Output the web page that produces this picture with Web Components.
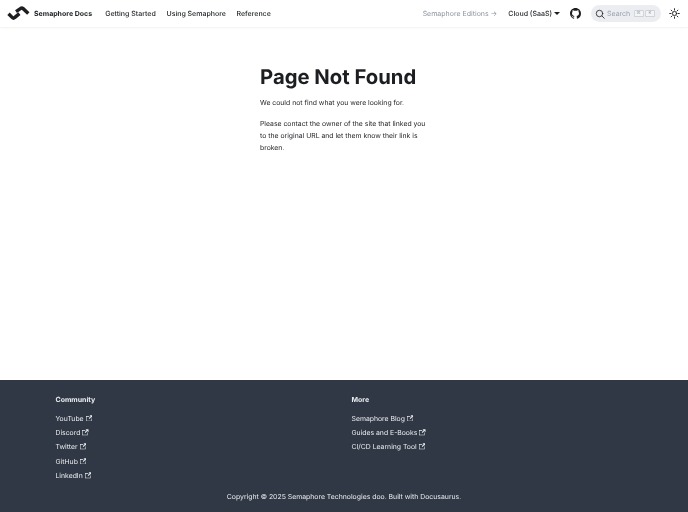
<!DOCTYPE html>
<html lang="en">
<head>
<meta charset="utf-8">
<title>Page Not Found</title>
<style>
html, body { margin: 0; height: 100%; }
body { font-family: Inter, "Liberation Sans", sans-serif; font-size: 6.9px; color: #1c1e21; text-rendering: geometricPrecision; }
</style>
</head>
<body>
<docs-page>
  <docs-navbar></docs-navbar>
  <not-found>
    <h1 slot="title">Page Not Found</h1>
    <p>We could not find what you were looking for.</p>
    <p>Please contact the owner of the site that linked you to the original URL and let them know their link is broken.</p>
  </not-found>
  <docs-footer>
    <footer-col slot="left" heading="Community" links="YouTube,Discord,Twitter,GitHub,LinkedIn"></footer-col>
    <footer-col slot="right" heading="More" links="Semaphore Blog,Guides and E-Books,CI/CD Learning Tool"></footer-col>
  </docs-footer>
</docs-page>
<script>
class DocsPage extends HTMLElement {
  constructor() {
    super();
    this.attachShadow({ mode: 'open' });
    this.shadowRoot.innerHTML = `
      <style>
        :host { display: flex; flex-direction: column; height: 512px; overflow: hidden; }
        ::slotted(not-found) { flex: 1; }
      </style>
      <slot></slot>
    `;
  }
}

class DocsNavbar extends HTMLElement {
  constructor() {
    super();
    this.attachShadow({ mode: 'open' });
    this.shadowRoot.innerHTML = `
      <style>
        :host {
          display: flex;
          align-items: center;
          height: 27px;
          padding: 0 8px 0 7px;
          background: #fff;
          box-shadow: 0 1px 2px rgba(0,0,0,0.06);
          position: relative;
          z-index: 1;
          filter: blur(0.3px);
          font-size: 7px;
          font-weight: 500;
          color: #1c1e21;
        }
        .logo { width: 23px; height: 15px; margin-right: 4px; }
        .brand { font-weight: 700; margin-right: 13px; }
        .link { margin-right: 10.7px; }
        .spacer { flex: 1; }
        .editions { color: #8d949e; font-weight: 400; margin-right: 11px; }
        .cloud { font-weight: 500; display: flex; align-items: center; gap: 2px; margin-right: 10px; }
        .caret { width: 0; height: 0; border: 3px solid transparent; border-top: 3.5px solid #1c1e21; border-bottom: 0; }
        .gh { width: 11px; height: 11px; margin-right: 10px; display: block; }
        .search {
          display: flex; align-items: center;
          width: 70px; height: 17px; box-sizing: border-box;
          padding: 0 4px;
          border-radius: 9px;
          background: #ebedf0;
          color: #969faf;
          font-weight: 400;
          margin-right: 8px;
        }
        .search svg { width: 10px; height: 10px; margin-right: 2px; }
        .keys { margin-left: auto; display: flex; gap: 1.5px; padding-right: 2px; }
        .key {
          width: 10px; height: 7.5px; border-radius: 1.5px;
          background: #f3f4f6;
          box-shadow: inset 0 0 0 0.7px #c4c8ce;
          font-size: 4.5px; line-height: 7.5px; text-align: center; color: #969faf;
        }
        .sun { width: 11px; height: 11px; display: block; }
      </style>
      <svg class="logo" viewBox="0 0 23 15" fill="none" stroke="#1c1e21" stroke-width="3.4">
        <path d="M1.5 7.8 L5.4 11.6 Q6.5 12.7 7.6 11.6 L12.4 7.6"/>
        <path d="M9 5.6 L13.7 2.4 Q14.8 1.5 15.9 2.4 L21.3 7.5"/>
      </svg>
      <span class="brand">Semaphore Docs</span>
      <span class="link">Getting Started</span>
      <span class="link">Using Semaphore</span>
      <span class="link">Reference</span>
      <span class="spacer"></span>
      <span class="editions">Semaphore Editions →</span>
      <span class="cloud">Cloud (SaaS) <span class="caret"></span></span>
      <svg class="gh" viewBox="0 0 16 16" fill="#1c1e21"><path d="M8 0C3.58 0 0 3.58 0 8c0 3.54 2.29 6.53 5.47 7.59.4.07.55-.17.55-.38 0-.19-.01-.82-.01-1.49-2.01.37-2.53-.49-2.69-.94-.09-.23-.48-.94-.82-1.13-.28-.15-.68-.52-.01-.53.63-.01 1.08.58 1.23.82.72 1.21 1.87.87 2.33.66.07-.52.28-.87.51-1.07-1.78-.2-3.64-.89-3.64-3.95 0-.87.31-1.59.82-2.15-.08-.2-.36-1.02.08-2.12 0 0 .67-.21 2.2.82.64-.18 1.32-.27 2-.27s1.36.09 2 .27c1.53-1.04 2.2-.82 2.2-.82.44 1.1.16 1.92.08 2.12.51.56.82 1.27.82 2.15 0 3.07-1.87 3.75-3.65 3.95.29.25.54.73.54 1.48 0 1.07-.01 1.93-.01 2.2 0 .21.15.46.55.38A8.01 8.01 0 0 0 16 8c0-4.42-3.58-8-8-8z"/></svg>
      <div class="search">
        <svg viewBox="0 0 20 20" fill="none" stroke="#1c1e21" stroke-width="1.6" stroke-linecap="round"><circle cx="9" cy="9" r="6.5"/><path d="M14 14l4.5 4.5"/></svg>
        <span>Search</span>
        <span class="keys"><span class="key">⌘</span><span class="key">K</span></span>
      </div>
      <svg class="sun" viewBox="0 0 24 24" fill="none" stroke="#1c1e21" stroke-width="2" stroke-linecap="round"><circle cx="12" cy="12" r="4.5"/><path d="M12 1.5v3M12 19.5v3M1.5 12h3M19.5 12h3M4.6 4.6l2.1 2.1M17.3 17.3l2.1 2.1M4.6 19.4l2.1-2.1M17.3 6.7l2.1-2.1"/></svg>
    `;
  }
}

class NotFound extends HTMLElement {
  constructor() {
    super();
    this.attachShadow({ mode: 'open' });
    this.shadowRoot.innerHTML = `
      <style>
        :host { display: block; padding: 36px 0 0 260px; background: #fff; filter: blur(0.3px); }
        .col { width: 172px; }
        ::slotted(h1) { margin: 0 0 6px; font-size: 20.3px; line-height: 28px; font-weight: 700; color: #1c1e21; white-space: nowrap; }
        ::slotted(p) { margin: 0 0 9.8px; font-size: 6.85px; line-height: 11.6px; color: #1c1e21; }
      </style>
      <div class="col">
        <slot name="title"></slot>
        <slot></slot>
      </div>
    `;
  }
}

class FooterCol extends HTMLElement {
  constructor() {
    super();
    this.attachShadow({ mode: 'open' });
    const links = this.getAttribute('links').split(',');
    const ext = `<svg viewBox="0 0 24 24" width="6.5" height="6.5" fill="#ebedf0"><path d="M21 13v10h-21v-19h12v2h-10v15h17v-8h2zm3-12h-10.988l4.035 4-6.977 7.07 2.828 2.828 6.977-7.07 4.125 4.172v-11z"/></svg>`;
    this.shadowRoot.innerHTML = `
      <style>
        :host { display: block; }
        h4 { margin: 0 0 5px; font-size: 7px; line-height: 12px; font-weight: 700; color: #ebedf0; }
        a { display: flex; align-items: center; gap: 2px; height: 14.3px; font-size: 6.85px; color: #ebedf0; }
      </style>
      <h4>${this.getAttribute('heading')}</h4>
      ${links.map(l => `<a>${l} ${ext}</a>`).join('')}
    `;
  }
}

class DocsFooter extends HTMLElement {
  constructor() {
    super();
    this.attachShadow({ mode: 'open' });
    this.shadowRoot.innerHTML = `
      <style>
        :host { display: block; height: 132px; box-sizing: border-box; padding: 14px 0 0 55.5px; background: #303846; filter: blur(0.3px); }
        .cols { display: grid; grid-template-columns: 296px 1fr; height: 96.5px; }
        .copy { margin-left: -55.5px; text-align: center; font-size: 6.88px; line-height: 12px; color: #ebedf0; }
      </style>
      <div class="cols"><slot name="left"></slot><slot name="right"></slot></div>
      <div class="copy">Copyright © 2025 Semaphore Technologies doo. Built with Docusaurus.</div>
    `;
  }
}

customElements.define('docs-page', DocsPage);
customElements.define('docs-navbar', DocsNavbar);
customElements.define('not-found', NotFound);
customElements.define('footer-col', FooterCol);
customElements.define('docs-footer', DocsFooter);
</script>
</body>
</html>
